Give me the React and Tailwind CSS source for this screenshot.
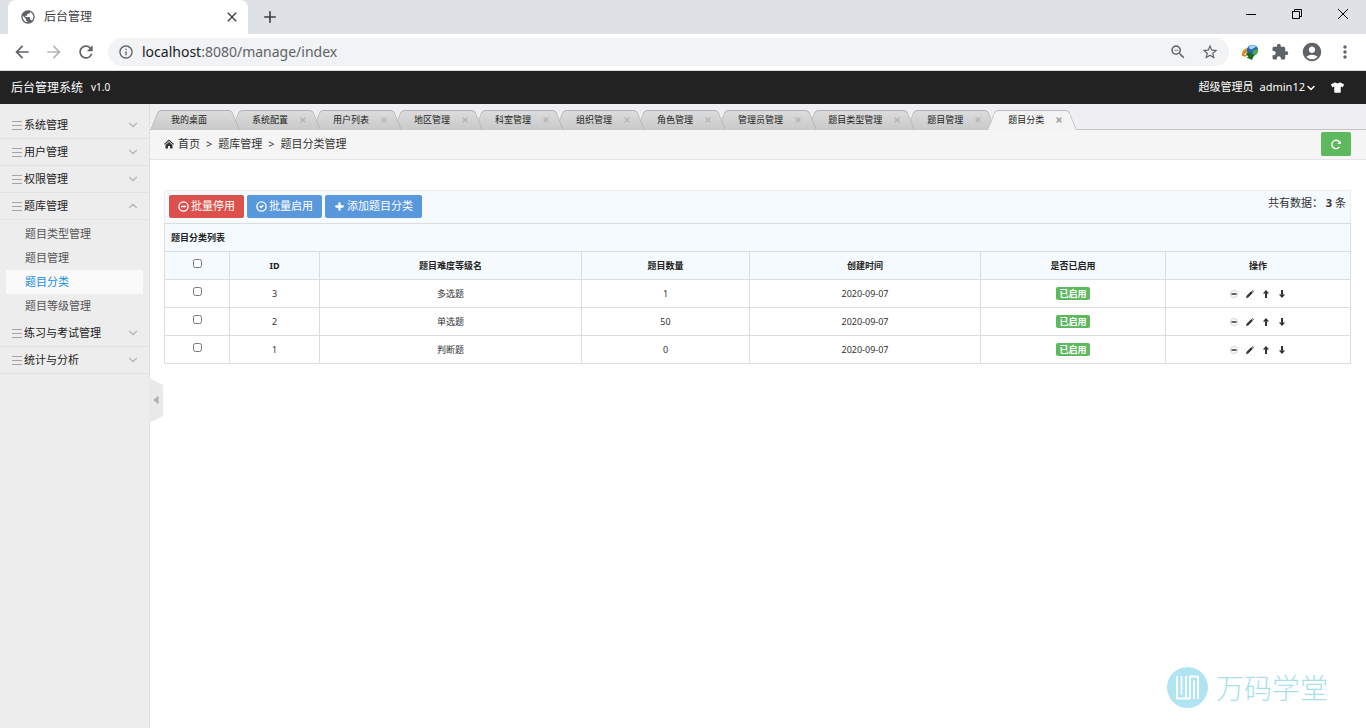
import {
  MdPublic, MdClose, MdAdd, MdArrowBack, MdArrowForward, MdRefresh, MdInfoOutline,
  MdZoomOut, MdStarBorder, MdExtension, MdAccountCircle, MdMoreVert,
} from 'react-icons/md'
import { FaTshirt } from 'react-icons/fa'
import { ChevronDown, ChevronUp, CircleMinus, CircleCheck, Plus, X } from 'lucide-react'

const menus = [
  { name: '系统管理' },
  { name: '用户管理' },
  { name: '权限管理' },
  { name: '题库管理', open: true, children: ['题目类型管理', '题目管理', '题目分类', '题目等级管理'] },
  { name: '练习与考试管理' },
  { name: '统计与分析' },
]

const tabs = [
  '我的桌面', '系统配置', '用户列表', '地区管理', '科室管理', '组织管理',
  '角色管理', '管理员管理', '题目类型管理', '题目管理', '题目分类',
]

const rows = [
  { id: 3, name: '多选题', count: 1, date: '2020-09-07' },
  { id: 2, name: '单选题', count: 50, date: '2020-09-07' },
  { id: 1, name: '判断题', count: 0, date: '2020-09-07' },
]

function DownloadGlobe() {
  return (
    <svg viewBox="0 0 18 18" className="w-[18px] h-[18px]">
      <path d="M1 13C0 8 4 4.500 8 5l2 4-3 1-2 3.500z" fill="#c9a227" />
      <path d="M1.500 13c0-3 2-5 4.500-5l-1 5.500z" fill="#e07b2c" />
      <path d="M3.500 12c0-1.500 1-2.500 2.500-2.500L5.500 12z" fill="#fff" />
      <circle cx="11.500" cy="7.300" r="5.600" fill="#2a66b8" />
      <path d="M8 4c1.500-2 5-2.500 7-.5-1 1.500-2.500 1-3.500 2.500C10 6.500 8 6 8 4z" fill="#a9d8f7" />
      <path d="M12.500 7.500c1.500-1.500 3.500-1 4.500-.5 0 3-1.500 4.500-4 5.500-1.500-1.500-1.500-4-.5-5z" fill="#4cae3c" />
      <path d="M4.500 11l4-2 2.500 3 2.500-.5L11 17l-5.500-2.500 2-1z" fill="#1c6b1c" />
    </svg>
  )
}

function BrowserBar() {
  return (
    <div className="text-[#3c4043]">
      <div className="flex h-[34px] bg-[#dee1e6] pl-2">
        <div className="flex items-center w-60 bg-white rounded-t-lg pl-3 pr-2">
          <MdPublic className="w-4 h-4 text-[#5f6368]" />
          <span className="flex-1 ml-2 text-xs">后台管理</span>
          <button aria-label="Close tab"><MdClose className="w-4 h-4" /></button>
        </div>
        <button aria-label="New tab" className="px-3"><MdAdd className="w-5 h-5" /></button>
        <div className="flex flex-1 justify-end items-start pt-2 text-black">
          <button aria-label="Minimize" className="w-[46px] flex justify-center">
            <svg viewBox="0 0 12 12" className="w-3 h-3" fill="none" stroke="currentColor"><path d="M1 6.500h10" /></svg>
          </button>
          <button aria-label="Restore" className="w-[46px] flex justify-center">
            <svg viewBox="0 0 12 12" className="w-3 h-3" fill="none" stroke="currentColor">
              <path d="M1.500 3.500h7v7h-7zM3.500 3.500v-2h7v7h-2" />
            </svg>
          </button>
          <button aria-label="Close" className="w-[46px] flex justify-center">
            <svg viewBox="0 0 12 12" className="w-3 h-3" fill="none" stroke="currentColor"><path d="M1 1l10 10M11 1L1 11" /></svg>
          </button>
        </div>
      </div>
      <div className="flex items-center h-[37px] bg-white border-b border-[#dcdcdc] pl-3 pr-[11px] text-[#5f6368]">
        <button aria-label="Back"><MdArrowBack className="w-5 h-5" /></button>
        <button aria-label="Forward" className="ml-3 text-[#b4b6b9]"><MdArrowForward className="w-5 h-5" /></button>
        <button aria-label="Reload" className="ml-3"><MdRefresh className="w-5 h-5" /></button>
        <div className="flex flex-1 items-center h-7 ml-3 px-2.5 rounded-full bg-[#f1f3f4]">
          <MdInfoOutline className="w-4 h-4" />
          <span className="flex-1 ml-2 text-sm"><span className="text-[#202124]">localhost</span>:8080/manage/index</span>
          <MdZoomOut className="w-[18px] h-[18px]" />
          <MdStarBorder className="w-[18px] h-[18px] ml-3.5" />
        </div>
        <div className="flex items-center gap-3 ml-3">
          <DownloadGlobe />
          <MdExtension className="w-[18px] h-[18px]" />
          <MdAccountCircle className="w-[22px] h-[22px]" />
          <MdMoreVert className="w-5 h-5" />
        </div>
      </div>
    </div>
  )
}

function Header() {
  return (
    <header className="flex items-center h-[33px] bg-[#222] text-white pl-[11px] pr-[22px]">
      <h1 className="text-xs">后台管理系统</h1>
      <span className="ml-2 text-[10px]">v1.0</span>
      <span className="ml-auto text-[11px]">超级管理员</span>
      <button className="flex items-center ml-1.5 text-[11px]">
        admin12<ChevronDown className="w-3 h-3" strokeWidth={3} />
      </button>
      <button aria-label="换肤" className="ml-3.5"><FaTshirt className="w-[13px] h-[13px]" /></button>
    </header>
  )
}

function Sidebar() {
  return (
    <aside className="relative w-[150px] shrink-0 bg-[#ededed] border-r border-[#e0e0e0] pt-2 text-[11px]">
      {menus.map((m) => (
        <div key={m.name}>
          <button className="flex items-center w-full h-[27px] pl-3 pr-[9px] border-b border-[#e2e2e2] text-[#222]">
            <svg viewBox="0 0 10 10" className="w-2.5 h-2.5 mr-0.5" stroke="#a5a5a5"><path d="M0 1.500h10M0 5.500h10M0 9.500h10" /></svg>
            {m.name}
            {m.open
              ? <ChevronUp className="w-3.5 h-3.5 ml-auto text-[#b5b5b5]" />
              : <ChevronDown className="w-3.5 h-3.5 ml-auto text-[#b5b5b5]" />}
          </button>
          {m.children && (
            <ul className="py-0.5 px-1.5 text-[#555]">
              {m.children.map((c) => (
                <li key={c}>
                  <a
                    href="#"
                    className={`block h-6 leading-6 pl-[19px] ${c === '题目分类' ? 'bg-[#fafafa] text-[#148cf1]' : ''}`}
                  >
                    {c}
                  </a>
                </li>
              ))}
            </ul>
          )}
        </div>
      ))}
      <button aria-label="收起菜单" className="absolute left-full top-[274px] w-[14px] h-[45px]">
        <svg viewBox="0 0 14 45" className="w-full h-full">
          <path d="M0 0l14 7v31L0 45z" fill="#e9e9e9" />
          <path d="M9.500 17.500v9l-5-4.500z" fill="#adadad" />
        </svg>
      </button>
    </aside>
  )
}

function Tab({ name, active, closable, order }) {
  const fill = active
    ? 'border-[#bbb] bg-[#f3f3f4]'
    : 'border-[#b0b0b0] bg-linear-to-b from-[#dcdcdc] to-[#c9c9c9]'
  return (
    <li
      className={`relative flex items-center h-5 pl-[21px] pr-[11px] -mr-[9px] ${active ? '-mb-px' : ''}`}
      style={{ zIndex: order }}
    >
      <span className={`absolute inset-y-0 left-0 right-1/2 origin-bottom-left -skew-x-[22deg] border-t border-l rounded-tl-sm ${fill}`} />
      <span className={`absolute inset-y-0 right-0 left-1/2 origin-bottom-right skew-x-[22deg] border-t border-r rounded-tr-sm ${fill}`} />
      <a href="#" className="relative whitespace-nowrap">{name}</a>
      <span className="relative w-[22px] flex justify-center pl-2">
        {closable && <X className={`w-2 h-2 ${active ? 'text-[#999]' : 'text-[#b5b5b5]'}`} strokeWidth={4} />}
      </span>
    </li>
  )
}

function TabBar() {
  return (
    <nav className="h-[26px] pt-1.5 bg-[#efeef0] border-b border-[#c4c4c4] text-[9px] text-[#222]">
      <ul className="relative z-0 flex items-start">
        {tabs.map((t, i) => {
          const active = i === tabs.length - 1
          return <Tab key={t} name={t} active={active} closable={i > 0} order={active ? 20 : 15 - i} />
        })}
      </ul>
    </nav>
  )
}

function Breadcrumb() {
  return (
    <div className="flex items-center h-[30px] pb-px pl-[14px] pr-[15px] bg-[#f5f5f5] border-b border-[#e5e5e5] text-[11px] text-[#333]">
      <svg viewBox="0 0 10 10" className="w-2.5 h-2.5 mr-1" fill="#333">
        <path d="M5 .5L10 5l-.8 .8L5 2.100 .8 5.800 0 5z" />
        <path d="M5 3l3.500 3v3.500H6V7H4v2.500H1.500V6z" />
      </svg>
      <a href="#">首页</a>
      <span className="mx-1.5">&gt;</span>
      <span>题库管理</span>
      <span className="mx-1.5">&gt;</span>
      <span>题目分类管理</span>
      <button aria-label="刷新" className="flex items-center justify-center ml-auto w-[30px] h-6 rounded-xs bg-[#5eb95e] text-white">
        <svg viewBox="0 0 12 12" className="w-3 h-3" fill="none" stroke="currentColor" strokeWidth="1.300">
          <path d="M9.500 8.800A4.200 4.200 0 1 1 10.100 5.500" />
          <path d="M7.200 6h3.800V3z" fill="currentColor" stroke="none" />
        </svg>
      </button>
    </div>
  )
}

function ToolButton({ icon: Icon, bold, className, children }) {
  return (
    <button className={`flex items-center gap-0.5 h-[23px] px-[9px] rounded-xs text-white ${className}`}>
      <Icon className="w-[11px] h-[11px]" strokeWidth={bold ? 5 : 3} />
      {children}
    </button>
  )
}

function RowActions() {
  return (
    <div className="flex items-center justify-center gap-2 text-[#333]">
      <button aria-label="停用">
        <svg viewBox="0 0 8 8" className="w-2 h-2">
          <circle cx="4" cy="4" r="3.500" fill="none" stroke="#bbb" strokeWidth=".7" />
          <path d="M1.500 4h5" stroke="#222" strokeWidth="1.400" />
        </svg>
      </button>
      <button aria-label="编辑">
        <svg viewBox="0 0 8 8" className="w-2 h-2" fill="currentColor">
          <path d="M0 8l.6-2.200L5.300 1.100l1.600 1.600L2.200 7.400zM5.900 .6l.5-.5 1.500 1.500-.5 .6z" />
        </svg>
      </button>
      <button aria-label="上移">
        <svg viewBox="0 0 8 8" className="w-2 h-2" fill="currentColor"><path d="M4 0l3.200 3.600H5V8H3V3.600H.8z" /></svg>
      </button>
      <button aria-label="下移">
        <svg viewBox="0 0 8 8" className="w-2 h-2" fill="currentColor"><path d="M4 8l3.200-3.600H5V0H3v4.400H.8z" /></svg>
      </button>
    </div>
  )
}

const cell = 'border border-[#ddd] h-7 p-0 text-center'

function CheckCell({ label, head }) {
  const Cell = head ? 'th' : 'td'
  return (
    <Cell className={cell}>
      <input type="checkbox" aria-label={label} className="block mx-auto mb-1 w-[9px] h-[9px]" />
    </Cell>
  )
}

function CategoryTable() {
  return (
    <table className="w-full table-fixed border-collapse text-[9px] text-[#333]">
      <colgroup>
        <col className="w-[65px]" />
        <col className="w-[90px]" />
        <col className="w-[262px]" />
        <col className="w-[168px]" />
        <col className="w-[231px]" />
        <col className="w-[185px]" />
        <col className="w-[185px]" />
      </colgroup>
      <thead className="bg-[#f5fafe] text-[#222]">
        <tr>
          <th colSpan={7} className="border border-[#ddd] h-7 px-1.5 py-0 text-left">题目分类列表</th>
        </tr>
        <tr>
          <CheckCell head label="全选" />
          <th className={cell}>ID</th>
          <th className={cell}>题目难度等级名</th>
          <th className={cell}>题目数量</th>
          <th className={cell}>创建时间</th>
          <th className={cell}>是否已启用</th>
          <th className={cell}>操作</th>
        </tr>
      </thead>
      <tbody>
        {rows.map((r) => (
          <tr key={r.id}>
            <CheckCell label={r.name} />
            <td className={cell}>{r.id}</td>
            <td className={cell}>{r.name}</td>
            <td className={cell}>{r.count}</td>
            <td className={cell}>{r.date}</td>
            <td className={cell}>
              <span className="inline-block h-[13px] leading-[14px] px-[3px] rounded-xs bg-[#5eb95e] font-bold text-white">已启用</span>
            </td>
            <td className={cell}><RowActions /></td>
          </tr>
        ))}
      </tbody>
    </table>
  )
}

function Watermark() {
  return (
    <div className="absolute right-[38px] bottom-5 flex items-center gap-2 text-[#a8dfee]">
      <svg viewBox="0 0 41 41" className="w-[41px] h-[41px]">
        <circle cx="20.500" cy="20.500" r="20.500" fill="#b0e4f2" />
        <path d="M10 9v22.500h9V9M14.500 9v18.500M23 32V9.500h8V32M27 13.500V32M18 31.500h5" fill="none" stroke="#fff" strokeWidth="1.800" />
      </svg>
      <span className="text-[28px] leading-10 font-light">万码学堂</span>
    </div>
  )
}

export default function App() {
  return (
    <div className="relative flex flex-col min-h-screen bg-white font-['Noto_Sans','Noto_Sans_CJK_SC',sans-serif]">
      <BrowserBar />
      <Header />
      <div className="flex flex-1">
        <Sidebar />
        <main className="flex-1 min-w-0">
          <TabBar />
          <Breadcrumb />
          <section className="pt-[30px] pl-[14px] pr-[15px] text-[11px] text-[#333]">
            <div className="flex items-start h-[33px] pt-1 px-1 bg-[#f5fafe] border border-b-0 border-[#eee]">
              <div className="flex gap-[3px]">
                <ToolButton icon={CircleMinus} className="bg-[#dd514c]">批量停用</ToolButton>
                <ToolButton icon={CircleCheck} className="bg-[#5a98de]">批量启用</ToolButton>
                <ToolButton icon={Plus} bold className="bg-[#5a98de]">添加题目分类</ToolButton>
              </div>
              <span className="ml-auto">共有数据： <strong>3</strong> 条</span>
            </div>
            <CategoryTable />
          </section>
        </main>
      </div>
      <Watermark />
    </div>
  )
}
